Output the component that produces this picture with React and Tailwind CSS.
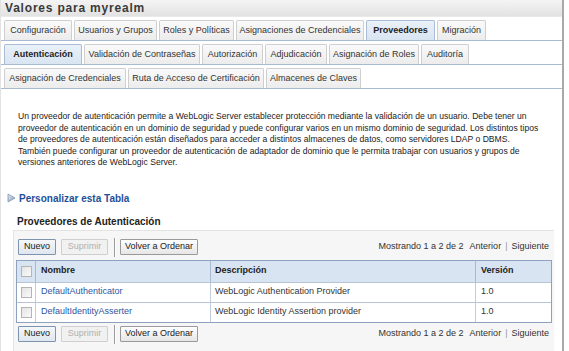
const FONT = { fontFamily: '"Liberation Sans", Arial, sans-serif' };

const TOP_TABS = [
  ["Configuración", "w-[68px]"],
  ["Usuarios y Grupos", "w-[83px]"],
  ["Roles y Políticas", "w-[75px]"],
  ["Asignaciones de Credenciales", "w-[128px]"],
  ["Proveedores", "w-[69px]", true],
  ["Migración", "w-[49px]"],
];

const SUB_TABS = [
  ["Autenticación", "w-[78px]", true],
  ["Validación de Contraseñas", "w-[116px]"],
  ["Autorización", "w-[61px]"],
  ["Adjudicación", "w-[62px]"],
  ["Asignación de Roles", "w-[90px]"],
  ["Auditoría", "w-[48px]"],
];

const SUB_TABS_2 = [
  ["Asignación de Credenciales", "w-[122px]"],
  ["Ruta de Acceso de Certificación", "w-[136px]"],
  ["Almacenes de Claves", "w-[95px]"],
];

const ROWS = [
  ["DefaultAuthenticator", "WebLogic Authentication Provider", "1.0"],
  ["DefaultIdentityAsserter", "WebLogic Identity Assertion provider", "1.0"],
];

function Tab({ label, width, active }) {
  return (
    <div
      className={`${width} h-[20px] flex items-center justify-center border border-b-0 rounded-t-[2px] text-[9px] whitespace-nowrap
        ${active
          ? "bg-gradient-to-b from-[#e9f0f8] to-[#d9e5f2] border-[#a9bdd6] font-bold text-[#222]"
          : "bg-gradient-to-b from-[#fafafa] to-[#ececec] border-[#cfcfcf] text-[#333]"}`}
    >
      {label}
    </div>
  );
}

function TabRow({ tabs, className }) {
  return (
    <div className={`flex items-end gap-[2px] pl-[3px] border-b border-[#a8bbd3] ${className}`}>
      {tabs.map(([label, width, active]) => (
        <Tab key={label} label={label} width={width} active={active} />
      ))}
    </div>
  );
}

function Check() {
  return <div className="w-[11px] h-[11px] border border-[#b4b4b4] bg-gradient-to-br from-[#e4e4e4] to-[#fafafa]" />;
}

function Btn({ children, kind, className = "" }) {
  const style =
    kind === "primary"
      ? "border-[#7e93ad] bg-gradient-to-b from-[#f4f7fb] to-[#dfe6ef] text-[#222]"
      : kind === "disabled"
      ? "border-[#cfcfcf] bg-[#f1f1f1] text-[#b0b0b0]"
      : "border-[#9a9a9a] bg-gradient-to-b from-[#ffffff] to-[#e6e6e6] text-[#222]";
  return (
    <div className={`h-[16px] flex items-center justify-center border rounded-[1px] text-[9px] ${style} ${className}`}>
      {children}
    </div>
  );
}

function Toolbar({ className }) {
  return (
    <div className={`flex items-center h-[19px] ${className}`}>
      <Btn kind="primary" className="w-[38px] ml-[4px]">Nuevo</Btn>
      <Btn kind="disabled" className="w-[47px] ml-[5px]">Suprimir</Btn>
      <div className="w-[2px] h-[19px] ml-[6px] border-l border-[#9a9a9a] border-r border-r-white" />
      <Btn className="w-[78px] ml-[4px]">Volver a Ordenar</Btn>
      <div className="ml-auto mr-[5px] text-[9px] text-[#333] whitespace-nowrap">
        Mostrando 1 a 2 de 2
        <span className="ml-[6px]">Anterior</span>
        <span className="mx-[4px] text-[#999]">|</span>
        <span>Siguiente</span>
      </div>
    </div>
  );
}

export default function App() {
  return (
    <div className="w-[569px] h-[351px] overflow-hidden bg-white" style={FONT}>
      <div className="w-[564px] h-[351px] border-r-2 border-[#a9a9a9] border-l border-l-[#e2e2e2] flex flex-col">
        {/* header */}
        <div className="h-[17px] shrink-0 flex items-center pl-[4px] bg-gradient-to-b from-[#f4f4f4] to-[#e2e2e2] border-b border-[#e9e9e9] text-[12px] font-bold tracking-[0.8px] text-[#3a3a3a]">
          Valores para myrealm
        </div>

        {/* tabs */}
        <TabRow tabs={TOP_TABS} className="pt-[3px]" />
        <TabRow tabs={SUB_TABS} className="pt-[3px]" />
        <TabRow tabs={SUB_TABS_2} className="pt-[3px]" />

        {/* description */}
        <div className="mt-[22px] pl-[17px] text-[8.6px] leading-[11.5px] text-[#222] whitespace-nowrap">
          <div>Un proveedor de autenticación permite a WebLogic Server establecer protección mediante la validación de un usuario. Debe tener un</div>
          <div>proveedor de autenticación en un dominio de seguridad y puede configurar varios en un mismo dominio de seguridad. Los distintos tipos</div>
          <div>de proveedores de autenticación están diseñados para acceder a distintos almacenes de datos, como servidores LDAP o DBMS.</div>
          <div>También puede configurar un proveedor de autenticación de adaptador de dominio que le permita trabajar con usuarios y grupos de</div>
          <div>versiones anteriores de WebLogic Server.</div>
        </div>

        {/* customize link */}
        <div className="mt-[22px] pl-[6px] flex items-center gap-[3px] text-[10px] font-bold text-[#1f4f97]">
          <svg width="9" height="10" viewBox="0 0 9 10">
            <defs>
              <linearGradient id="tri" x1="0" y1="0" x2="1" y2="1">
                <stop offset="0" stopColor="#e9eef5" />
                <stop offset="1" stopColor="#7f95b3" />
              </linearGradient>
            </defs>
            <polygon points="1,1 8,5 1,9" fill="url(#tri)" stroke="#8096b4" strokeWidth="0.8" />
          </svg>
          Personalizar esta Tabla
        </div>

        {/* table section */}
        <div className="mt-[8px] pl-[16px] text-[10px] font-bold text-[#222]">Proveedores de Autenticación</div>

        <div className="mt-[1px] ml-[12px] mr-[8px] flex-1 bg-[#f6f6f6] border-t border-l border-[#e3e3e3]">
          <Toolbar className="mt-[7px]" />

          <div className="mt-[3px] ml-[2px] mr-[2px] border border-[#8ea2bf] text-[9px]">
            <div className="flex h-[21px] bg-[#d8e4f2] font-bold text-[#222]">
              <div className="w-[19px] flex items-center justify-center border-r border-[#a9bad2]"><Check /></div>
              <div className="w-[175px] flex items-center pl-[5px] border-r border-[#a9bad2]">Nombre</div>
              <div className="w-[265px] flex items-center pl-[4px] border-r border-[#a9bad2]">Descripción</div>
              <div className="flex-1 flex items-center pl-[5px]">Versión</div>
            </div>
            {ROWS.map(([name, desc, ver]) => (
              <div key={name} className="flex h-[20px] bg-white border-t border-[#b7c4d6] text-[#333]">
                <div className="w-[19px] flex items-center justify-center border-r border-[#c2cedd]"><Check /></div>
                <div className="w-[175px] flex items-center pl-[5px] border-r border-[#c2cedd] text-[#2f55a0]">{name}</div>
                <div className="w-[265px] flex items-center pl-[4px] border-r border-[#c2cedd]">{desc}</div>
                <div className="flex-1 flex items-center pl-[5px]">{ver}</div>
              </div>
            ))}
          </div>

          <Toolbar className="mt-[2px]" />
        </div>
      </div>
    </div>
  );
}
